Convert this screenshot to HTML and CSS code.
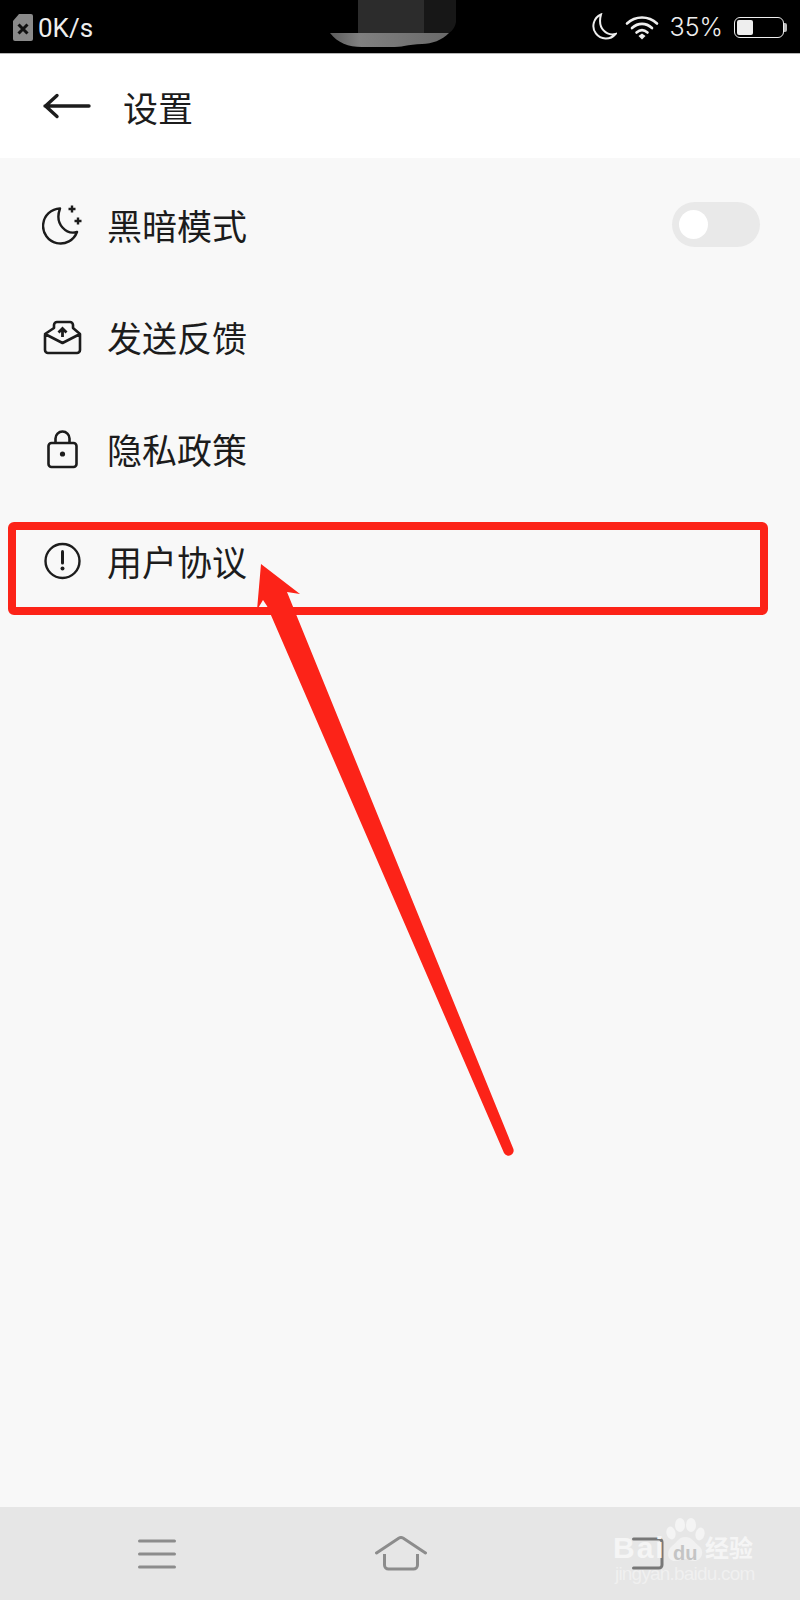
FILE: index.html
```html
<!DOCTYPE html>
<html lang="zh-CN">
<head>
    <meta charset="UTF-8">
    <title>设置</title>
    <link rel="stylesheet" href="styles.css">
</head>
<body>
    <div class="phone">
        <div class="statusbar">
            <div class="status-left">
                <svg class="sim" width="20" height="27" viewBox="0 0 20 27">
                    <path d="M6 0H18a2 2 0 0 1 2 2V25a2 2 0 0 1-2 2H2a2 2 0 0 1-2-2V7Z" fill="#8a8a8a"/>
                    <path d="M5.500 10.500L14.500 19.500M14.500 10.500L5.500 19.500" stroke="#111" stroke-width="3" fill="none"/>
                </svg>
                <span>0K/s</span>
            </div>
            <div class="status-right">
                <svg class="moon" width="26" height="28" viewBox="0 0 26 28">
                    <path d="M10 1.500A12.500 12.500 0 1 0 24.500 21C16 23 6 16 10 1.500Z" fill="none" stroke="#eee" stroke-width="2"/>
                </svg>
                <svg class="wifi" width="34" height="26" viewBox="0 0 34 26">
                    <path d="M2 9.500C10.500 1.500 23.500 1.500 32 9.500M7 14C13 8.500 21 8.500 27 14M11.500 18.500C15 15.500 19 15.500 22.500 18.500" fill="none" stroke="#eee" stroke-width="2.600" stroke-linecap="round"/>
                    <path d="M13.500 22L17 19.500L20.500 22L17 25.500Z" fill="#eee"/>
                </svg>
                <span class="pct">35%</span>
                <div class="battery"><div class="battery-fill"></div></div>
                <div class="battery-tip"></div>
            </div>
            <svg class="notch-blur" width="126" height="48" viewBox="0 0 126 48">
                <defs>
                    <linearGradient id="bandfade">
                        <stop offset="0" stop-color="#5c5c5c"/>
                        <stop offset="0.25" stop-color="#808080"/>
                        <stop offset="1" stop-color="#6a6a6a"/>
                    </linearGradient>
                </defs>
                <path d="M28 0H94V33H28Z" fill="#2c2c2c"/>
                <path d="M94 0H126V22Q125 29 119 33H94Z" fill="#171717"/>
                <path d="M0 33H119C112 40 102 44 92 44C85 44 80 45 74 46Q70 47 60 47H32C18 47 8 43 0 33Z" fill="url(#bandfade)"/>
            </svg>
        </div>

        <div class="header">
            <svg class="back" width="48" height="26" viewBox="0 0 48 26">
                <path d="M2 13H46M14 2.500L2.500 13L14 23.500" fill="none" stroke="#1c1c1c" stroke-width="3.400" stroke-linecap="round" stroke-linejoin="round"/>
            </svg>
            <span class="title">设置</span>
        </div>

        <div class="settings">
            <div class="row">
                <svg class="row-icon" width="40" height="40" viewBox="0 0 40 40">
                    <path d="M18 3.500A17.500 17.500 0 1 0 35 27C25 30 12 20 18 3.500Z" fill="none" stroke="#1c1c1c" stroke-width="2.400" stroke-linejoin="round"/>
                    <path d="M30 0.500V7.500M26.500 4H33.500M36 12.500V19.500M32.500 16H39.500" fill="none" stroke="#1c1c1c" stroke-width="2.400"/>
                </svg>
                <span class="row-label">黑暗模式</span>
                <div class="toggle"><div class="knob"></div></div>
            </div>
            <div class="row">
                <svg class="row-icon" width="40" height="40" viewBox="0 0 40 40">
                    <path d="M3 17V33a3 3 0 0 0 3 3H35a3 3 0 0 0 3-3V17L20.500 26L3 17L12 11V8a3 3 0 0 1 3-3H28a3 3 0 0 1 3 3V11L38 17" fill="none" stroke="#1c1c1c" stroke-width="2.600" stroke-linejoin="round"/>
                    <path d="M20.500 20V12M16.500 15.500L20.500 11.500L24.500 15.500" fill="none" stroke="#1c1c1c" stroke-width="2.800"/>
                </svg>
                <span class="row-label">发送反馈</span>
            </div>
            <div class="row">
                <svg class="row-icon" width="40" height="40" viewBox="0 0 40 40">
                    <rect x="6.500" y="14" width="28" height="24" rx="3" fill="none" stroke="#1c1c1c" stroke-width="2.600"/>
                    <path d="M13.500 14V9.500a7 7 0 0 1 14 0V14" fill="none" stroke="#1c1c1c" stroke-width="2.600"/>
                    <circle cx="20.500" cy="25" r="2.600" fill="#1c1c1c"/>
                </svg>
                <span class="row-label">隐私政策</span>
            </div>
            <div class="row">
                <svg class="row-icon" width="40" height="40" viewBox="0 0 40 40">
                    <circle cx="20.500" cy="20" r="17" fill="none" stroke="#1c1c1c" stroke-width="2.400"/>
                    <path d="M20.500 10.500V22" stroke="#1c1c1c" stroke-width="3" stroke-linecap="round"/>
                    <circle cx="20.500" cy="27.500" r="2" fill="#1c1c1c"/>
                </svg>
                <span class="row-label">用户协议</span>
            </div>
        </div>

        <div class="navbar">
            <svg width="38" height="32" viewBox="0 0 38 32">
                <path d="M1.500 3H36.500M1.500 16H36.500M1.500 29H36.500" stroke="#8c8c8c" stroke-width="3" stroke-linecap="round"/>
            </svg>
            <svg class="nav-home" width="52" height="35" viewBox="0 0 52 35">
                <path d="M1.500 17L24 2Q26 1 28 2L50.500 17" fill="none" stroke="#8c8c8c" stroke-width="3" stroke-linecap="round"/>
                <path d="M9.500 18V29a4 4 0 0 0 4 4H38.500a4 4 0 0 0 4-4V18" fill="none" stroke="#8c8c8c" stroke-width="3"/>
            </svg>
            <svg class="nav-recent" width="32" height="33" viewBox="0 0 32 33">
                <path d="M1.500 2H27a3 3 0 0 1 3 3V28a3 3 0 0 1-3 3H1.500" fill="none" stroke="#777" stroke-width="3" stroke-linecap="round"/>
            </svg>
        </div>

        <!-- 红框和箭头是后加的标注 -->
        <div class="mark-box"></div>
        <svg class="mark-arrow" width="800" height="1600" viewBox="0 0 800 1600">
            <path d="M261 564L300 594L287 592L513 1148A4.800 4.800 0 0 1 504 1153L267 606L263 600L257 610Z" fill="#fc2318"/>
        </svg>

        <div class="watermark">
            <svg class="wm-paw" width="44" height="46" viewBox="0 0 44 46">
                <ellipse cx="7" cy="15" rx="4.500" ry="6.500" fill="#f4f4f4" transform="rotate(-15 7 15)"/>
                <ellipse cx="16" cy="7" rx="5" ry="7" fill="#f4f4f4"/>
                <ellipse cx="27" cy="7" rx="5" ry="7" fill="#f4f4f4"/>
                <ellipse cx="36" cy="16" rx="4.500" ry="6.500" fill="#f4f4f4" transform="rotate(15 36 16)"/>
                <path d="M21 19C28 19 30 24 35 28C41 33 38 43 30 43C26 43 24 41 21 41C18 41 15 43 11 43C3 43 2 33 8 28C13 24 15 19 21 19Z" fill="#f1f1f1"/>
            </svg>
            <span class="wm-bai">Bai</span>
            <span class="wm-du">du</span>
            <span class="wm-jy">经验</span>
            <span class="wm-url">jingyan.baidu.com</span>
        </div>
    </div>
</body>
</html>
```

FILE: styles.css
```css
body {
    margin: 0;
    background: #f8f8f8;
    font-family: "Roboto", "Noto Sans CJK SC", sans-serif;
}
.phone {
    position: relative;
    width: 800px;
    height: 1600px;
    overflow: hidden;
    display: flex;
    flex-direction: column;
}
.statusbar {
    position: relative;
    height: 54px;
    flex: none;
    box-sizing: border-box;
    padding: 13px 13px 0 13px;
    background: #000;
    border-bottom: 1px solid #b5b5b5;
    color: #eee;
    display: flex;
    justify-content: space-between;
    align-items: flex-start;
}
.status-left {
    display: flex;
    align-items: center;
    gap: 5px;
    font-size: 26px;
    line-height: 28px;
}
.status-left span {
    margin-top: 1px;
}
.status-right {
    display: flex;
    align-items: center;
    font-size: 25px;
    line-height: 26px;
}
.moon {
    margin-right: 8px;
}
.wifi {
    margin-right: 11px;
}
.pct {
    margin-right: 11px;
    font-family: "Inter", "Roboto", sans-serif;
    font-weight: 300;
}
.battery {
    width: 50px;
    height: 21px;
    box-sizing: border-box;
    border: 1.500px solid #eee;
    border-radius: 6px;
    padding: 2px;
}
.battery-fill {
    width: 16px;
    height: 100%;
    background: #eee;
    border-radius: 2px;
}
.battery-tip {
    width: 3px;
    height: 9px;
    background: #bbb;
    border-radius: 0 2px 2px 0;
}
.notch-blur {
    position: absolute;
    left: 330px;
    top: 0;
}
.header {
    height: 104px;
    flex: none;
    box-sizing: border-box;
    padding: 0 0 0 43px;
    background: #fff;
    display: flex;
    align-items: center;
    gap: 32px;
}
.title {
    font-size: 35px;
    color: #1c1c1c;
}
.settings {
    flex: 1;
    padding-top: 10px;
}
.row {
    height: 112px;
    box-sizing: border-box;
    padding: 0 40px 0 42px;
    display: flex;
    align-items: center;
}
.row-icon {
    flex: none;
    margin-top: 1px;
}
.row-label {
    margin-left: 25px;
    font-size: 35px;
    color: #1c1c1c;
}
.toggle {
    width: 88px;
    height: 45px;
    margin: 1px 0 0 auto;
    background: #e9e9e9;
    border-radius: 23px;
    display: flex;
    align-items: center;
    padding-left: 7px;
    box-sizing: border-box;
}
.knob {
    width: 29px;
    height: 29px;
    border-radius: 50%;
    background: #fff;
}
.navbar {
    height: 93px;
    flex: none;
    box-sizing: border-box;
    padding-left: 138px;
    background: #e6e6e6;
    display: flex;
    align-items: center;
}
.nav-home {
    margin-left: 199px;
}
.nav-recent {
    margin-left: 205px;
}
.mark-box {
    position: absolute;
    left: 8px;
    top: 522px;
    width: 760px;
    height: 93px;
    box-sizing: border-box;
    border: 8px solid #fc2318;
    border-radius: 6px;
}
.mark-arrow {
    position: absolute;
    left: 0;
    top: 0;
}
.watermark {
    position: absolute;
    left: 612px;
    top: 1518px;
    width: 146px;
    height: 70px;
    color: #f5f5f5;
}
.wm-paw {
    position: absolute;
    left: 52px;
    top: 0;
}
.wm-bai {
    position: absolute;
    left: 1px;
    top: 15px;
    font-size: 30px;
    line-height: 30px;
    font-weight: 700;
    font-family: "Liberation Sans", sans-serif;
    letter-spacing: 2px;
}
.wm-du {
    position: absolute;
    left: 61px;
    top: 25px;
    font-size: 20px;
    line-height: 20px;
    font-weight: 700;
    color: #c4c4c4;
    font-family: "Liberation Sans", sans-serif;
}
.wm-jy {
    position: absolute;
    left: 93px;
    top: 19px;
    font-size: 24px;
    line-height: 24px;
    font-weight: 700;
    white-space: nowrap;
}
.wm-url {
    position: absolute;
    left: 3px;
    top: 46px;
    font-size: 19px;
    line-height: 20px;
    letter-spacing: -0.8px;
    white-space: nowrap;
    color: #f0f0f0;
    font-family: "Liberation Sans", sans-serif;
}
```
